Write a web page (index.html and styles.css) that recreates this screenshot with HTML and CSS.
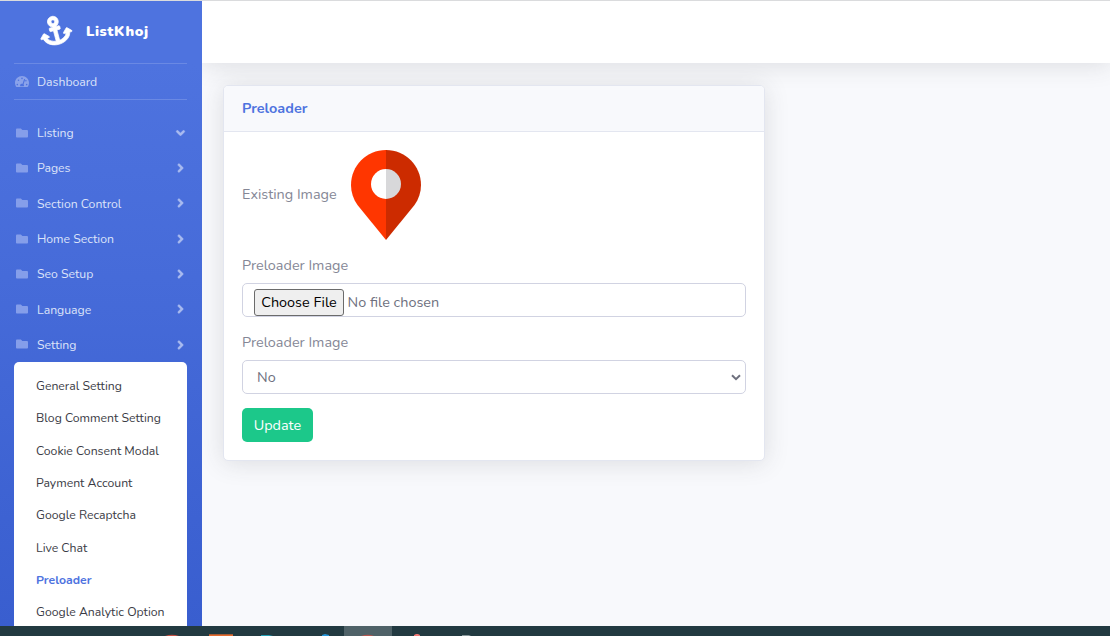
FILE: index.html
```html
<!DOCTYPE html>
<html lang="en">
<head>
<meta charset="utf-8">
<title>ListKhoj - Preloader</title>
<link rel="stylesheet" href="styles.css">
</head>
<body>
<svg class="defs" width="0" height="0">
  <symbol id="folder" viewBox="0 0 512 512"><path d="M464 128H272l-64-64H48C21.49 64 0 85.49 0 112v288c0 26.51 21.49 48 48 48h416c26.51 0 48-21.49 48-48V176c0-26.51-21.49-48-48-48z"/></symbol>
  <symbol id="angle" viewBox="0 0 256 512"><path d="M224.3 273l-136 136c-9.4 9.4-24.6 9.4-33.9 0l-22.6-22.6c-9.4-9.4-9.4-24.6 0-33.9l96.4-96.4-96.4-96.4c-9.4-9.4-9.4-24.6 0-33.9L54.3 103c9.4-9.4 24.6-9.4 33.9 0l136 136c9.5 9.4 9.5 24.6.1 34z"/></symbol>
</svg>
<div class="page">
  <div class="wrapper">
    <nav class="sidebar">
      <a class="brand">
        <svg class="anchor" viewBox="0 0 576 512"><path d="M12.971 352h32.394C67.172 454.735 181.944 512 288 512c106.229 0 220.853-57.38 242.635-160h32.394c10.691 0 16.045-12.926 8.485-20.485l-67.029-67.029c-4.686-4.686-12.284-4.686-16.971 0l-67.029 67.029c-7.56 7.56-2.206 20.485 8.485 20.485h35.146c-20.29 54.317-84.963 86.588-144.117 94.015V256h52c6.627 0 12-5.373 12-12v-40c0-6.627-5.373-12-12-12h-52v-5.47c37.281-13.22 63.995-48.725 64-90.5C384.005 43.772 341.605.738 289.37.01 235.723-.739 192 42.525 192 96c0 41.798 26.716 77.35 64 90.53V192h-52c-6.627 0-12 5.373-12 12v40c0 6.627 5.373 12 12 12h52v190.015c-58.936-7.399-123.82-39.679-144.117-94.015h35.146c10.691 0 16.045-12.926 8.485-20.485l-67.029-67.029c-4.686-4.686-12.284-4.686-16.971 0L4.485 331.515C-3.074 339.074 2.28 352 12.971 352zM288 64c17.645 0 32 14.355 32 32s-14.355 32-32 32-32-14.355-32-32 14.355-32 32-32z"/></svg>
        <span>ListKhoj</span>
      </a>
      <a class="dashboard">
        <svg class="tacho" viewBox="0 0 576 512"><path fill-rule="evenodd" d="M288 32C129 32 0 161 0 320c0 53 14 102 39 145 6 9 16 15 27 15h444c11 0 21-6 27-15 25-43 39-92 39-145C576 161 447 32 288 32zM288 96a32 32 0 1 1 0 64 32 32 0 0 1 0-64zM96 352a32 32 0 1 1 0 64 32 32 0 0 1 0-64zM144 176a32 32 0 1 1 0 64 32 32 0 0 1 0-64zM399 155c12 4 20 18 15 31l-61 184c22 23 22 51 9 78H214c-12-45 12-91 59-95 12-2 24 0 35 3l61-185c4-13 18-20 30-16zM448 192a32 32 0 1 1 0 64 32 32 0 0 1 0-64zM480 352a32 32 0 1 1 0 64 32 32 0 0 1 0-64z"/></svg>
        <span>Dashboard</span>
      </a>
      <div class="menu">
        <a class="item open"><svg class="folder"><use href="#folder"/></svg><span>Listing</span><svg class="angle"><use href="#angle"/></svg></a>
        <a class="item"><svg class="folder"><use href="#folder"/></svg><span>Pages</span><svg class="angle"><use href="#angle"/></svg></a>
        <a class="item"><svg class="folder"><use href="#folder"/></svg><span>Section Control</span><svg class="angle"><use href="#angle"/></svg></a>
        <a class="item"><svg class="folder"><use href="#folder"/></svg><span>Home Section</span><svg class="angle"><use href="#angle"/></svg></a>
        <a class="item"><svg class="folder"><use href="#folder"/></svg><span>Seo Setup</span><svg class="angle"><use href="#angle"/></svg></a>
        <a class="item"><svg class="folder"><use href="#folder"/></svg><span>Language</span><svg class="angle"><use href="#angle"/></svg></a>
        <a class="item"><svg class="folder"><use href="#folder"/></svg><span>Setting</span><svg class="angle"><use href="#angle"/></svg></a>
      </div>
      <div class="submenu">
        <a>General Setting</a>
        <a>Blog Comment Setting</a>
        <a>Cookie Consent Modal</a>
        <a>Payment Account</a>
        <a>Google Recaptcha</a>
        <a>Live Chat</a>
        <a class="active">Preloader</a>
        <a>Google Analytic Option</a>
      </div>
    </nav>
    <main class="content">
      <header class="topbar"></header>
      <section class="card">
        <h6 class="card-header">Preloader</h6>
        <form class="card-body">
          <div class="existing">
            <label>Existing Image</label>
            <svg class="pin" viewBox="0 0 70 90">
              <path fill="#ff3600" d="M35 0C15.500 0 0 15.700 0 35c0 7.500 2.300 14 6.500 20L35 90z"/>
              <path fill="#cc2b00" d="M35 0c19.500 0 35 15.700 35 35 0 7.500-2.300 14-6.500 20L35 90z"/>
              <path fill="#fff" d="M35 19a15 15 0 0 0 0 30z"/>
              <path fill="#d8d8da" d="M35 19a15 15 0 0 1 0 30z"/>
            </svg>
          </div>
          <label class="label">Preloader Image</label>
          <div class="control file"><button type="button">Choose File</button><span>No file chosen</span></div>
          <label class="label">Preloader Image</label>
          <div class="control select"><span>No</span><svg viewBox="0 0 10 7"><path d="M1 1.200l4 4 4-4"/></svg></div>
          <button type="button" class="update">Update</button>
        </form>
      </section>
    </main>
  </div>
  <footer class="taskbar">
    <svg viewBox="0 0 1110 10">
      <path fill="#4f6268" d="M344 0h48v10h-48z"/>
      <path fill="#c34f43" d="M165 10q7-2.500 14 0z"/>
      <path fill="#e46b2f" d="M209 10V8.300h24V10z"/>
      <path fill="#219fb5" d="M261 10V9h8l4 1z"/>
      <path fill="#2496db" d="M322 10v-1l3-1 4 1v1z"/>
      <path fill="#b5564f" d="M361 10q7-2.500 13 0z"/>
      <path fill="#ee7774" d="M414 10V9l2-1h2l2 1v1z"/>
      <path fill="#87979b" d="M462 10V9h7l2 1z"/>
    </svg>
  </footer>
</div>
</body>
</html>
```
FILE: styles.css
```css
* { box-sizing: border-box; }
body {
  margin: 0;
  font-family: Nunito, Lato, "Open Sans", sans-serif;
  font-size: 14.4px;
  color: #858796;
  background: #f8f9fc;
}
.defs { display: block; height: 0; }
.page { height: 636px; display: flex; flex-direction: column; overflow: hidden; border-top: 1px solid #dadbdd; }
.wrapper { flex: 1; min-height: 0; display: flex; overflow: hidden; }

.sidebar {
  position: relative;
  z-index: 1;
  width: 202px;
  flex: none;
  padding: 0 15px 0 14px;
  background: linear-gradient(180deg, #4e73df 10%, #395ecf 100%);
  color: #dce3f9;
  font-size: 12.24px;
}
.brand { height: 63px; display: flex; align-items: center; gap: 14.500px; padding: 0 0 2px 26px; border-bottom: 1px solid #6a89e4; color: #fff; }
.brand span { font-size: 14.4px; font-weight: 900; letter-spacing: .6px; }
.anchor { width: 32.400px; height: 28.800px; margin: -2px 0 0 -1px; overflow: visible; fill: #fff; stroke: #fff; stroke-width: 12; transform: rotate(-15deg); }
.dashboard { height: 36px; display: flex; align-items: center; gap: 8px; padding-left: 1px; border-bottom: 1px solid #6a89e4; }
.tacho { width: 14px; height: 13px; fill: #8aa2ea; }
.menu { display: flex; flex-direction: column; padding-top: 15.500px; }
.item { height: 35.300px; display: flex; align-items: center; padding: 0 3.500px 0 2px; }
.folder { width: 12px; height: 12px; margin: -1px 9px 0 0; fill: #859eea; }
.angle { width: 7px; height: 14px; margin: -.5px 0 0 auto; fill: #a9bbf0; stroke: #a9bbf0; stroke-width: 12; }
.open .angle { transform: rotate(90deg); }
.submenu { height: 290px; margin-top: -1px; padding: 8.300px 0 0 22px; display: flex; flex-direction: column; background: #fff; border-radius: 5px; color: #3a3b45; }
.submenu a { height: 32.300px; flex: none; display: flex; align-items: center; }
.submenu .active { color: #4e73df; font-weight: 700; }

.content { flex: 1; min-width: 0; background: #f8f9fc; }
.topbar { height: 62px; background: #fff; box-shadow: 0 2px 25px rgba(58, 59, 69, .15); }
.card { width: 542px; height: 376px; margin: 22px 0 0 21px; background: #fff; border: 1px solid #e3e6f0; border-radius: 5px; box-shadow: 0 2px 25px rgba(58, 59, 69, .15); }
.card-header { height: 46px; margin: 0; padding: 0 18px 2px; display: flex; align-items: center; background: #f8f9fc; border-bottom: 1px solid #e3e6f0; border-radius: 4px 4px 0 0; color: #4e73df; font-size: 14.400px; font-weight: 700; }
.card-body { padding: 18px; display: flex; flex-direction: column; }
.existing { height: 90px; display: flex; align-items: center; gap: 14px; }
.existing label { padding-bottom: 2px; }
.pin { width: 70px; height: 90px; }
.label { height: 20px; margin: 15px 0 8px; line-height: 20px; }
.control { height: 34px; display: flex; align-items: center; border: 1px solid #d1d3e2; border-radius: 5px; color: #6e707e; }
.file { padding: 4px 11px 0; }
.file button { width: 90px; height: 27px; padding: 0; border: 1px solid #6b6b6b; border-radius: 3px; background: #efefef; color: #000; font: inherit; }
.file span { margin-left: 3.600px; }
.select { justify-content: space-between; padding: 0 4px 0 14px; }
.select svg { width: 10px; height: 7px; fill: none; stroke: #6e707e; stroke-width: 2; }
.update { width: 71px; height: 34px; margin-top: 14px; padding: 0; border: 0; border-radius: 5px; background: #1cc88a; color: #fff; font: inherit; }

.taskbar { height: 10px; flex: none; background: #223a41; }
.taskbar svg { display: block; width: 1110px; height: 10px; }
```
